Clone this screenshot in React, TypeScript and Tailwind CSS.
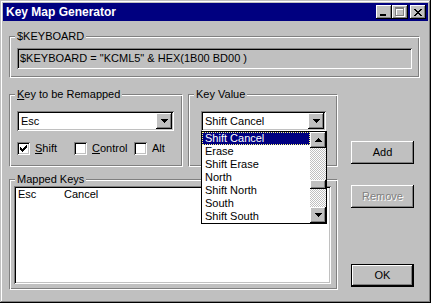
import React from "react";

const raised =
  "shadow-[inset_-1px_-1px_#000,inset_1px_1px_#fff,inset_-2px_-2px_#808080]";
const sunken =
  "shadow-[inset_1px_1px_#808080,inset_-1px_-1px_#fff,inset_2px_2px_#000,inset_-2px_-2px_#c0c0c0]";
const dither =
  "bg-[conic-gradient(#fff_25%,#c0c0c0_0_50%,#fff_0_75%,#c0c0c0_0)] bg-[length:2px_2px]";

function DownArrow() {
  return (
    <svg width="7" height="4" viewBox="0 0 7 4" shapeRendering="crispEdges">
      <rect x="0" y="0" width="7" height="1" fill="#000" />
      <rect x="1" y="1" width="5" height="1" fill="#000" />
      <rect x="2" y="2" width="3" height="1" fill="#000" />
      <rect x="3" y="3" width="1" height="1" fill="#000" />
    </svg>
  );
}

function UpArrow() {
  return (
    <svg width="7" height="4" viewBox="0 0 7 4" shapeRendering="crispEdges">
      <rect x="3" y="0" width="1" height="1" fill="#000" />
      <rect x="2" y="1" width="3" height="1" fill="#000" />
      <rect x="1" y="2" width="5" height="1" fill="#000" />
      <rect x="0" y="3" width="7" height="1" fill="#000" />
    </svg>
  );
}

function PixelGlyph({ rows, w, h }: { rows: string[]; w: number; h: number }) {
  return (
    <svg width={w} height={h} viewBox={`0 0 ${w} ${h}`} shapeRendering="crispEdges">
      {rows.map((r, y) =>
        r.split("").map((c, x) =>
          c === "#" ? (
            <rect key={`${x}-${y}`} x={x} y={y} width="1" height="1" fill="#000" />
          ) : null
        )
      )}
    </svg>
  );
}

const checkRows = [
  "......#",
  ".....##",
  "#...###",
  "##.###.",
  "#####..",
  ".###...",
  "..#....",
];

const closeRows = [
  "##....##",
  ".##..##.",
  "..####..",
  "...##...",
  "..####..",
  ".##..##.",
  "##....##",
];

function TitleButton({ kind }: { kind: "min" | "max" | "close" }) {
  return (
    <div
      className={`w-[16px] h-[14px] bg-[#c0c0c0] relative flex items-center justify-center ${raised}`}
    >
      {kind === "min" && (
        <svg width="16" height="14" viewBox="0 0 16 14" shapeRendering="crispEdges">
          <rect x="4" y="9" width="6" height="2" fill="#000" />
        </svg>
      )}
      {kind === "max" && (
        <svg width="16" height="14" viewBox="0 0 16 14" shapeRendering="crispEdges">
          <g fill="#fff">
            <rect x="4" y="3" width="9" height="2" />
            <rect x="4" y="3" width="1" height="9" />
            <rect x="12" y="3" width="1" height="9" />
            <rect x="4" y="11" width="9" height="1" />
          </g>
          <g fill="#808080">
            <rect x="3" y="2" width="9" height="2" />
            <rect x="3" y="2" width="1" height="9" />
            <rect x="11" y="2" width="1" height="9" />
            <rect x="3" y="10" width="9" height="1" />
          </g>
        </svg>
      )}
      {kind === "close" && <PixelGlyph rows={closeRows} w={8} h={7} />}
    </div>
  );
}

function GroupBox({
  label,
  className,
  children,
}: {
  label: React.ReactNode;
  className: string;
  children?: React.ReactNode;
}) {
  return (
    <div
      className={`relative border border-t-[#808080] border-l-[#808080] border-b-white border-r-white shadow-[inset_1px_1px_#fff,inset_-1px_-1px_#808080] ${className}`}
    >
      <div className="absolute left-[5px] -top-[7px] px-[2px] bg-[#c0c0c0] leading-[13px] whitespace-nowrap">
        {label}
      </div>
      {children}
    </div>
  );
}

function Combo({ value, className }: { value: string; className: string }) {
  return (
    <div className={`h-[20px] bg-white flex p-[2px] ${sunken} ${className}`}>
      <div className="flex-1 flex items-center pl-[2px] whitespace-nowrap overflow-hidden">
        {value}
      </div>
      <div
        className={`w-[16px] h-[16px] bg-[#c0c0c0] flex items-center justify-center ${raised}`}
      >
        <DownArrow />
      </div>
    </div>
  );
}

function CheckBox({
  checked,
  label,
  className,
}: {
  checked?: boolean;
  label: React.ReactNode;
  className?: string;
}) {
  return (
    <div className={`flex items-center gap-[5px] ${className ?? ""}`}>
      <div
        className={`w-[13px] h-[13px] bg-white flex items-center justify-center ${sunken}`}
      >
        {checked && <PixelGlyph rows={checkRows} w={7} h={7} />}
      </div>
      <span className="leading-[13px] -mt-[1px]">{label}</span>
    </div>
  );
}

function Button({
  children,
  disabled,
  isDefault,
  className,
}: {
  children: React.ReactNode;
  disabled?: boolean;
  isDefault?: boolean;
  className?: string;
}) {
  return (
    <div
      className={`w-[63px] h-[23px] bg-[#c0c0c0] flex items-center justify-center ${
        isDefault ? "border border-black" : ""
      } ${raised} ${className ?? ""}`}
    >
      <span
        className={
          disabled ? "text-[#808080] [text-shadow:1px_1px_0_#fff]" : "text-black"
        }
      >
        {children}
      </span>
    </div>
  );
}

const dropItems = [
  "Shift Cancel",
  "Erase",
  "Shift Erase",
  "North",
  "Shift North",
  "South",
  "Shift South",
];

export default function App() {
  return (
    <div className="w-[431px] h-[303px] bg-[#c0c0c0] p-[3px] flex flex-col font-['Liberation_Sans',Arial,sans-serif] text-[11px] leading-[13px] text-black shadow-[inset_-1px_-1px_#000,inset_1px_1px_#c0c0c0,inset_-2px_-2px_#808080,inset_2px_2px_#fff] select-none overflow-hidden">
      {/* Title bar */}
      <div className="h-[18px] bg-[#000080] flex items-center pl-[3px] pr-[2px]">
        <span className="flex-1 text-white font-bold text-[12px] leading-[13px] whitespace-nowrap">
          Key Map Generator
        </span>
        <div className="flex items-center">
          <TitleButton kind="min" />
          <TitleButton kind="max" />
          <div className="w-[2px]" />
          <TitleButton kind="close" />
        </div>
      </div>

      {/* Client area */}
      <div className="flex flex-col pl-[6px] pt-[15px]">
        <GroupBox label="$KEYBOARD" className="w-[411px] h-[42px] pl-[7px] pt-[11px]">
          <div
            className={`w-[395px] h-[21px] bg-[#c0c0c0] flex items-center pl-[3px] whitespace-nowrap ${sunken}`}
          >
            $KEYBOARD = "KCML5" &amp; HEX(1B00 BD00 )
          </div>
        </GroupBox>

        <div className="flex mt-[16px]">
          <div className="w-[329px] flex flex-col">
            <div className="flex gap-[5px]">
              <GroupBox
                label={
                  <>
                    <span className="underline">K</span>ey to be Remapped
                  </>
                }
                className="w-[174px] h-[73px] pl-[7px] pt-[16px]"
              >
                <Combo value="Esc" className="w-[157px]" />
                <div className="flex mt-[11px]">
                  <CheckBox
                    checked
                    className="w-[57px]"
                    label={
                      <>
                        <span className="underline">S</span>hift
                      </>
                    }
                  />
                  <CheckBox
                    className="w-[60px]"
                    label={
                      <>
                        <span className="underline">C</span>ontrol
                      </>
                    }
                  />
                  <CheckBox label="Alt" />
                </div>
              </GroupBox>

              <GroupBox
                label="Key Value"
                className="w-[150px] h-[73px] pl-[12px] pt-[16px] z-10"
              >
                <Combo value="Shift Cancel" className="w-[125px]" />
                {/* Open drop-down list */}
                <div className="absolute left-[12px] top-[36px] w-[126px] h-[93px] border border-black bg-white flex">
                  <div className="flex-1 flex flex-col">
                    {dropItems.map((it, i) => (
                      <div
                        key={it}
                        className={`h-[13px] border leading-[11px] pl-[2px] whitespace-nowrap ${
                          i === 0
                            ? "bg-[#000080] text-white border-dotted border-[#ffff7f]"
                            : "border-transparent"
                        }`}
                      >
                        {it}
                      </div>
                    ))}
                  </div>
                  <div className="w-[16px] flex flex-col">
                    <div
                      className={`h-[16px] bg-[#c0c0c0] flex items-center justify-center ${raised}`}
                    >
                      <UpArrow />
                    </div>
                    <div className={`flex-1 flex flex-col ${dither}`}>
                      <div className="h-[32px]" />
                      <div className={`h-[9px] bg-[#c0c0c0] ${raised}`} />
                    </div>
                    <div
                      className={`h-[16px] bg-[#c0c0c0] flex items-center justify-center ${raised}`}
                    >
                      <DownArrow />
                    </div>
                  </div>
                </div>
              </GroupBox>
            </div>

            <GroupBox label="Mapped Keys" className="w-[329px] h-[111px] mt-[12px] pl-[4px] pt-[6px]">
              <div className={`w-[317px] h-[98px] bg-white p-[2px] ${sunken}`}>
                <div className="flex h-[13px] items-center pl-[2px]">
                  <span className="w-[46px]">Esc</span>
                  <span>Cancel</span>
                </div>
              </div>
            </GroupBox>
          </div>

          <div className="flex flex-col ml-[13px]">
            <Button className="mt-[47px]">Add</Button>
            <Button className="mt-[21px]" disabled>
              Remove
            </Button>
            <Button className="mt-[56px]" isDefault>
              OK
            </Button>
          </div>
        </div>
      </div>
    </div>
  );
}
